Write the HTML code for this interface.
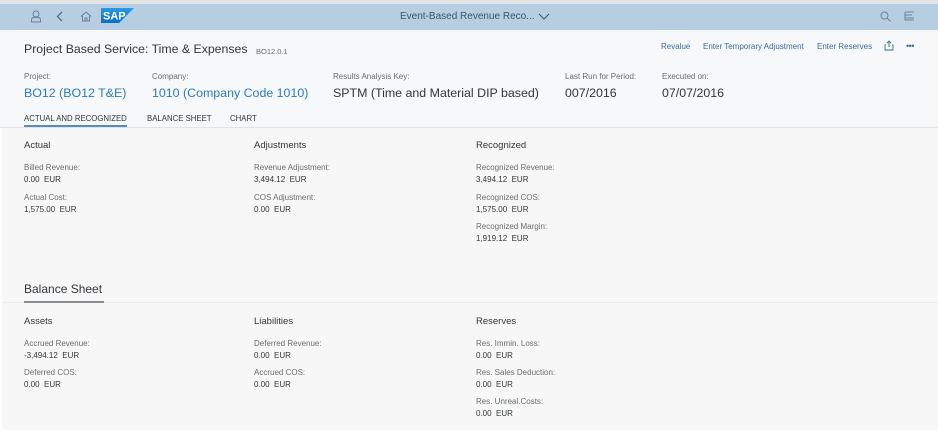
<!DOCTYPE html>
<html><head><meta charset="utf-8"><style>
*{margin:0;padding:0;box-sizing:border-box}
body{width:938px;height:440px;background:#fff;font-family:"Liberation Sans",sans-serif;position:relative;overflow:hidden}
.a{position:absolute;white-space:nowrap}
.lbl{font-size:8px;color:#6a6d70}
.val{font-size:8px;color:#32363a}
.big{font-size:12.4px;color:#2a7bbd}
.sec{font-size:9.5px;color:#32363a}
</style></head><body>
<div class="a" style="left:0;top:0;width:938px;height:4px;background:#e4e4e4"></div>
<div class="a" style="left:0;top:4px;width:938px;height:26px;background:#b6cde2"></div>
<div class="a" style="left:0;top:30px;width:938px;height:97px;background:#f6f8fa"></div>
<div class="a" style="left:0;top:127px;width:938px;height:1px;background:#dde4ea"></div>
<div class="a" style="left:2px;top:128px;width:936px;height:302px;background:#f7f7f7"></div>
<div class="a" style="left:2px;top:302px;width:936px;height:1px;background:#ececec"></div>

<svg class="a" style="left:30px;top:10px" width="12" height="13" viewBox="0 0 12 13" fill="none" stroke="#6d8299" stroke-width="1"><circle cx="6" cy="4" r="3"/><path d="M1.5 12V9.5Q1.5 7.5 4 7.5H8Q10.5 7.5 10.5 9.5V12Z"/></svg>
<svg class="a" style="left:56px;top:11px" width="8" height="11" viewBox="0 0 8 11" fill="none" stroke="#5a6f85" stroke-width="1.3"><path d="M6 1L1.5 5.5L6 10"/></svg>
<svg class="a" style="left:80px;top:11px" width="12" height="11" viewBox="0 0 12 11" fill="none" stroke="#6d8299" stroke-width="1"><path d="M1 5.5L6 1L11 5.5M2.5 4.5V10H9.5V4.5M5 10V7H7V10"/></svg>
<svg class="a" style="left:101px;top:8px" width="33" height="15" viewBox="0 0 33 15"><defs><linearGradient id="g" x1="0" y1="0" x2="0" y2="1"><stop offset="0" stop-color="#2a9be0"/><stop offset="1" stop-color="#0b6cc2"/></linearGradient></defs><path d="M0 0H33L18 15H0Z" fill="url(#g)"/><text x="2" y="11.5" font-family="Liberation Sans" font-weight="bold" font-size="11" fill="#fff">SAP</text></svg>
<div class="a" style="left:400px;top:11px;font-size:10px;color:#3e5468">Event-Based Revenue Reco...</div>
<svg class="a" style="left:538px;top:13px" width="12" height="7" viewBox="0 0 12 7" fill="none" stroke="#3e5468" stroke-width="1"><path d="M1 1L6 6L11 1"/></svg>
<svg class="a" style="left:880px;top:11px" width="11" height="11" viewBox="0 0 11 11" fill="none" stroke="#6d8299" stroke-width="1"><circle cx="4.5" cy="4.5" r="3.5"/><path d="M7 7L10.5 10.5"/></svg>
<svg class="a" style="left:904px;top:11px" width="11" height="10" viewBox="0 0 11 10" fill="none" stroke="#6d8299" stroke-width="1"><path d="M1 1H10M1 4H8M1 7H10M1 1V9H10"/></svg>

<div class="a" style="left:24px;top:42px;font-size:12.3px;color:#32363a">Project Based Service: Time &amp; Expenses</div>
<div class="a" style="left:256px;top:47px;font-size:7.5px;color:#6a6d70">BO12.0.1</div>
<div class="a" style="left:661px;top:42px;font-size:8px;color:#3a6d9a">Revalue</div>
<div class="a" style="left:703px;top:42px;font-size:8px;color:#3a6d9a">Enter Temporary Adjustment</div>
<div class="a" style="left:817px;top:42px;font-size:8px;color:#3a6d9a">Enter Reserves</div>
<svg class="a" style="left:884px;top:40px" width="10" height="11" viewBox="0 0 10 11" fill="none" stroke="#3a6d9a" stroke-width="0.9"><path d="M5 7V1M3 3L5 1L7 3M2 5H1V10H9V5H8"/></svg>
<div class="a" style="left:906px;top:41px;font-size:9px;color:#3a6d9a;letter-spacing:-0.5px">•••</div>

<div class="a lbl" style="left:24px;top:72px">Project:</div>
<div class="a lbl" style="left:152px;top:72px">Company:</div>
<div class="a lbl" style="left:333px;top:72px">Results Analysis Key:</div>
<div class="a lbl" style="left:565px;top:72px">Last Run for Period:</div>
<div class="a lbl" style="left:662px;top:72px">Executed on:</div>
<div class="a big" style="left:24px;top:86px">BO12 (BO12 T&amp;E)</div>
<div class="a big" style="left:152px;top:86px">1010 (Company Code 1010)</div>
<div class="a big" style="left:333px;top:86px;color:#32363a">SPTM (Time and Material DIP based)</div>
<div class="a big" style="left:565px;top:86px;color:#32363a">007/2016</div>
<div class="a big" style="left:662px;top:86px;color:#32363a">07/07/2016</div>

<div class="a" style="left:24px;top:114px;font-size:7.8px;color:#32363a">ACTUAL AND RECOGNIZED</div>
<div class="a" style="left:147px;top:114px;font-size:7.8px;color:#32363a">BALANCE SHEET</div>
<div class="a" style="left:230px;top:114px;font-size:7.8px;color:#32363a">CHART</div>
<div class="a" style="left:24px;top:125px;width:103px;height:2px;background:#5b8bb8"></div>

<div class="a sec" style="left:24px;top:140px">Actual</div>
<div class="a sec" style="left:254px;top:140px">Adjustments</div>
<div class="a sec" style="left:476px;top:140px">Recognized</div>
<div class="a lbl" style="left:24px;top:163px">Billed Revenue:</div>
<div class="a val" style="left:24px;top:175px">0.00 &nbsp;EUR</div>
<div class="a lbl" style="left:24px;top:193px">Actual Cost:</div>
<div class="a val" style="left:24px;top:205px">1,575.00 &nbsp;EUR</div>
<div class="a lbl" style="left:254px;top:163px">Revenue Adjustment:</div>
<div class="a val" style="left:254px;top:175px">3,494.12 &nbsp;EUR</div>
<div class="a lbl" style="left:254px;top:193px">COS Adjustment:</div>
<div class="a val" style="left:254px;top:205px">0.00 &nbsp;EUR</div>
<div class="a lbl" style="left:476px;top:163px">Recognized Revenue:</div>
<div class="a val" style="left:476px;top:175px">3,494.12 &nbsp;EUR</div>
<div class="a lbl" style="left:476px;top:193px">Recognized COS:</div>
<div class="a val" style="left:476px;top:205px">1,575.00 &nbsp;EUR</div>
<div class="a lbl" style="left:476px;top:222px">Recognized Margin:</div>
<div class="a val" style="left:476px;top:234px">1,919.12 &nbsp;EUR</div>

<div class="a" style="left:24px;top:282px;font-size:12px;color:#32363a">Balance Sheet</div>
<div class="a" style="left:24px;top:301px;width:80px;height:2px;background:#8a8d90"></div>

<div class="a sec" style="left:24px;top:316px">Assets</div>
<div class="a sec" style="left:254px;top:316px">Liabilities</div>
<div class="a sec" style="left:476px;top:316px">Reserves</div>
<div class="a lbl" style="left:24px;top:339px">Accrued Revenue:</div>
<div class="a val" style="left:24px;top:351px">-3,494.12 &nbsp;EUR</div>
<div class="a lbl" style="left:24px;top:368px">Deferred COS:</div>
<div class="a val" style="left:24px;top:380px">0.00 &nbsp;EUR</div>
<div class="a lbl" style="left:254px;top:339px">Deferred Revenue:</div>
<div class="a val" style="left:254px;top:351px">0.00 &nbsp;EUR</div>
<div class="a lbl" style="left:254px;top:368px">Accrued COS:</div>
<div class="a val" style="left:254px;top:380px">0.00 &nbsp;EUR</div>
<div class="a lbl" style="left:476px;top:339px">Res. Immin. Loss:</div>
<div class="a val" style="left:476px;top:351px">0.00 &nbsp;EUR</div>
<div class="a lbl" style="left:476px;top:368px">Res. Sales Deduction:</div>
<div class="a val" style="left:476px;top:380px">0.00 &nbsp;EUR</div>
<div class="a lbl" style="left:476px;top:397px">Res. Unreal.Costs:</div>
<div class="a val" style="left:476px;top:409px">0.00 &nbsp;EUR</div>
</body></html>
